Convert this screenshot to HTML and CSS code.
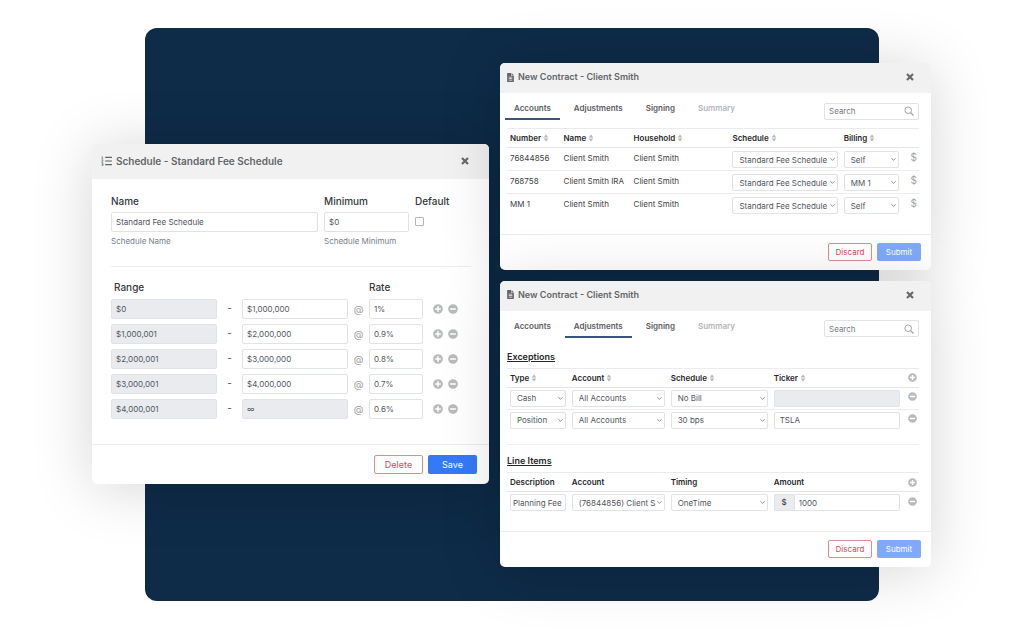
FILE: index.html
```html
<!DOCTYPE html>
<html lang="en">
<head>
<meta charset="utf-8">
<meta name="viewport" content="width=device-width, initial-scale=1">
<title>Fee schedules and contracts</title>
<link rel="stylesheet" href="styles.css">
</head>
<body>
<svg class="sprite" aria-hidden="true">
  <symbol id="plus" viewBox="0 0 512 512"><path d="M256 8a248 248 0 1 0 0 496 248 248 0 1 0 0-496zm144 288H296v104h-80V296H112v-80h104V112h80v104h104z"/></symbol>
  <symbol id="minus" viewBox="0 0 512 512"><path d="M256 8a248 248 0 1 0 0 496 248 248 0 1 0 0-496zm148 288H108v-80h296z"/></symbol>
  <symbol id="sort" viewBox="0 0 10 14"><path d="M1 6L5 1l4 5zM1 8l4 5 4-5z"/></symbol>
  <symbol id="close" viewBox="0 0 10 10"><path d="M2 2l6 6M8 2l-6 6" fill="none" stroke="currentColor" stroke-width="2.200"/></symbol>
  <symbol id="file" viewBox="0 0 384 512"><path fill-rule="evenodd" d="M224 0v136c0 13 11 24 24 24h136v328c0 13-11 24-24 24H24c-13 0-24-11-24-24V24C0 11 11 0 24 0zM256 0l128 128H256zM90 220v40h204v-40zM90 300v40h204v-40zM90 380v40h204v-40z"/></symbol>
  <symbol id="list" viewBox="0 0 12 11"><path d="M4.500 1.500H12M4.500 5.500H12M4.500 9.500H12" fill="none" stroke="currentColor" stroke-width="1.200"/><path d="M.6 .8h.9v2.400M.5 3.200h2M.5 4.600h1.600v.9L.6 6.700h1.800M.5 8h1.700v2.600H.5M1 9.300h1.200" fill="none" stroke="currentColor" stroke-width=".7"/></symbol>
  <symbol id="search" viewBox="0 0 10 10"><circle cx="4.200" cy="4.200" r="3.300" fill="none" stroke="currentColor"/><path d="M6.600 6.600L9.500 9.500" stroke="currentColor" stroke-width="1.300"/></symbol>
</svg>

<main class="stage">
  <div class="backdrop"></div>

  <section class="dialog schedule" aria-label="Schedule">
    <header class="dialog-head">
      <svg class="icon icon-list"><use href="#list"/></svg>
      <h2>Schedule - Standard Fee Schedule</h2>
      <button class="icon-btn close" aria-label="Close"><svg class="icon"><use href="#close"/></svg></button>
    </header>
    <div class="dialog-body">
      <div class="basics">
        <div class="field">
          <label for="s-name">Name</label>
          <input id="s-name" class="control" type="text" value="Standard Fee Schedule">
          <small>Schedule Name</small>
        </div>
        <div class="field">
          <label for="s-min">Minimum</label>
          <input id="s-min" class="control" type="text" value="$0">
          <small>Schedule Minimum</small>
        </div>
        <div class="field">
          <label for="s-def">Default</label>
          <input id="s-def" class="check" type="checkbox">
        </div>
      </div>
      <hr>
      <div class="tier tier-head"><span class="range-label">Range</span><span></span><span></span><span></span><span>Rate</span></div>
      <div class="tiers">
        <div class="tier">
          <input class="control" aria-label="From" value="$0" disabled><span class="dash">-</span>
          <input class="control" aria-label="To" value="$1,000,000"><span class="at">@</span>
          <input class="control" aria-label="Rate" value="1%">
          <span class="tier-actions"><button class="icon-btn" aria-label="Add"><svg class="icon"><use href="#plus"/></svg></button><button class="icon-btn" aria-label="Remove"><svg class="icon"><use href="#minus"/></svg></button></span>
        </div>
        <div class="tier">
          <input class="control" aria-label="From" value="$1,000,001" disabled><span class="dash">-</span>
          <input class="control" aria-label="To" value="$2,000,000"><span class="at">@</span>
          <input class="control" aria-label="Rate" value="0.9%">
          <span class="tier-actions"><button class="icon-btn" aria-label="Add"><svg class="icon"><use href="#plus"/></svg></button><button class="icon-btn" aria-label="Remove"><svg class="icon"><use href="#minus"/></svg></button></span>
        </div>
        <div class="tier">
          <input class="control" aria-label="From" value="$2,000,001" disabled><span class="dash">-</span>
          <input class="control" aria-label="To" value="$3,000,000"><span class="at">@</span>
          <input class="control" aria-label="Rate" value="0.8%">
          <span class="tier-actions"><button class="icon-btn" aria-label="Add"><svg class="icon"><use href="#plus"/></svg></button><button class="icon-btn" aria-label="Remove"><svg class="icon"><use href="#minus"/></svg></button></span>
        </div>
        <div class="tier">
          <input class="control" aria-label="From" value="$3,000,001" disabled><span class="dash">-</span>
          <input class="control" aria-label="To" value="$4,000,000"><span class="at">@</span>
          <input class="control" aria-label="Rate" value="0.7%">
          <span class="tier-actions"><button class="icon-btn" aria-label="Add"><svg class="icon"><use href="#plus"/></svg></button><button class="icon-btn" aria-label="Remove"><svg class="icon"><use href="#minus"/></svg></button></span>
        </div>
        <div class="tier">
          <input class="control" aria-label="From" value="$4,000,001" disabled><span class="dash">-</span>
          <input class="control" aria-label="To" value="∞" disabled><span class="at">@</span>
          <input class="control" aria-label="Rate" value="0.6%">
          <span class="tier-actions"><button class="icon-btn" aria-label="Add"><svg class="icon"><use href="#plus"/></svg></button><button class="icon-btn" aria-label="Remove"><svg class="icon"><use href="#minus"/></svg></button></span>
        </div>
      </div>
    </div>
    <footer class="dialog-foot">
      <button class="btn btn-danger">Delete</button>
      <button class="btn btn-primary">Save</button>
    </footer>
  </section>

  <div class="contracts">
    <section class="dialog contract" aria-label="New contract, accounts">
      <header class="dialog-head">
        <svg class="icon icon-file"><use href="#file"/></svg>
        <h2>New Contract - Client Smith</h2>
        <button class="icon-btn close" aria-label="Close"><svg class="icon"><use href="#close"/></svg></button>
      </header>
      <div class="toolbar">
        <nav class="tabs">
          <a href="#" class="active">Accounts</a><a href="#">Adjustments</a><a href="#">Signing</a><a href="#" class="muted">Summary</a>
        </nav>
        <label class="search"><input type="text" placeholder="Search" aria-label="Search"><svg class="icon"><use href="#search"/></svg></label>
      </div>
      <div class="dialog-body">
        <table class="grid accounts">
          <colgroup><col class="a1"><col class="a2"><col class="a3"><col class="a4"><col class="a5"><col></colgroup>
          <thead><tr>
            <th>Number <svg class="sort"><use href="#sort"/></svg></th>
            <th>Name <svg class="sort"><use href="#sort"/></svg></th>
            <th>Household <svg class="sort"><use href="#sort"/></svg></th>
            <th>Schedule <svg class="sort"><use href="#sort"/></svg></th>
            <th>Billing <svg class="sort"><use href="#sort"/></svg></th>
            <th></th>
          </tr></thead>
          <tbody>
            <tr><td class="text">76844856</td><td class="text">Client Smith</td><td class="text">Client Smith</td>
              <td><select class="control" aria-label="Schedule"><option>Standard Fee Schedule</option></select></td>
              <td><select class="control" aria-label="Billing"><option>Self</option></select></td>
              <td class="money">$</td></tr>
            <tr><td class="text">768758</td><td class="text">Client Smith IRA</td><td class="text">Client Smith</td>
              <td><select class="control" aria-label="Schedule"><option>Standard Fee Schedule</option></select></td>
              <td><select class="control" aria-label="Billing"><option>MM 1</option></select></td>
              <td class="money">$</td></tr>
            <tr><td class="text">MM 1</td><td class="text">Client Smith</td><td class="text">Client Smith</td>
              <td><select class="control" aria-label="Schedule"><option>Standard Fee Schedule</option></select></td>
              <td><select class="control" aria-label="Billing"><option>Self</option></select></td>
              <td class="money">$</td></tr>
          </tbody>
        </table>
      </div>
      <footer class="dialog-foot">
        <button class="btn btn-danger">Discard</button>
        <button class="btn btn-soft">Submit</button>
      </footer>
    </section>

    <section class="dialog contract" aria-label="New contract, adjustments">
      <header class="dialog-head">
        <svg class="icon icon-file"><use href="#file"/></svg>
        <h2>New Contract - Client Smith</h2>
        <button class="icon-btn close" aria-label="Close"><svg class="icon"><use href="#close"/></svg></button>
      </header>
      <div class="toolbar">
        <nav class="tabs">
          <a href="#">Accounts</a><a href="#" class="active">Adjustments</a><a href="#">Signing</a><a href="#" class="muted">Summary</a>
        </nav>
        <label class="search"><input type="text" placeholder="Search" aria-label="Search"><svg class="icon"><use href="#search"/></svg></label>
      </div>
      <div class="dialog-body adjustments">
        <h3>Exceptions</h3>
        <table class="grid">
          <colgroup><col class="b1"><col class="b2"><col class="b3"><col class="b4"><col></colgroup>
          <thead><tr>
            <th>Type <svg class="sort"><use href="#sort"/></svg></th>
            <th>Account <svg class="sort"><use href="#sort"/></svg></th>
            <th>Schedule <svg class="sort"><use href="#sort"/></svg></th>
            <th>Ticker <svg class="sort"><use href="#sort"/></svg></th>
            <th class="act"><button class="icon-btn" aria-label="Add exception"><svg class="icon"><use href="#plus"/></svg></button></th>
          </tr></thead>
          <tbody>
            <tr>
              <td><select class="control" aria-label="Type"><option>Cash</option></select></td>
              <td><select class="control" aria-label="Account"><option>All Accounts</option></select></td>
              <td><select class="control" aria-label="Schedule"><option>No Bill</option></select></td>
              <td><input class="control" aria-label="Ticker" disabled></td>
              <td class="act"><button class="icon-btn" aria-label="Remove"><svg class="icon"><use href="#minus"/></svg></button></td>
            </tr>
            <tr>
              <td><select class="control" aria-label="Type"><option>Position</option></select></td>
              <td><select class="control" aria-label="Account"><option>All Accounts</option></select></td>
              <td><select class="control" aria-label="Schedule"><option>30 bps</option></select></td>
              <td><input class="control" aria-label="Ticker" value="TSLA"></td>
              <td class="act"><button class="icon-btn" aria-label="Remove"><svg class="icon"><use href="#minus"/></svg></button></td>
            </tr>
          </tbody>
        </table>
        <hr>
        <h3>Line Items</h3>
        <table class="grid">
          <colgroup><col class="b1"><col class="b2"><col class="b3"><col class="b4"><col></colgroup>
          <thead><tr>
            <th>Description</th><th>Account</th><th>Timing</th><th>Amount</th>
            <th class="act"><button class="icon-btn" aria-label="Add line item"><svg class="icon"><use href="#plus"/></svg></button></th>
          </tr></thead>
          <tbody>
            <tr>
              <td><input class="control snug" aria-label="Description" value="Planning Fee"></td>
              <td><select class="control" aria-label="Account"><option>(76844856) Client S</option></select></td>
              <td><select class="control" aria-label="Timing"><option>OneTime</option></select></td>
              <td><div class="group"><span class="addon">$</span><input class="control" aria-label="Amount" value="1000"></div></td>
              <td class="act"><button class="icon-btn" aria-label="Remove"><svg class="icon"><use href="#minus"/></svg></button></td>
            </tr>
          </tbody>
        </table>
      </div>
      <footer class="dialog-foot">
        <button class="btn btn-danger">Discard</button>
        <button class="btn btn-soft">Submit</button>
      </footer>
    </section>
  </div>
</main>
</body>
</html>
```
FILE: styles.css
```css
* { box-sizing: border-box; }

body {
  margin: 0;
  background: #fff;
  color: #495057;
  font-family: Inter, "Liberation Sans", sans-serif;
  font-size: 8px;
  line-height: 12px;
}

button, input, select { font: inherit; color: inherit; margin: 0; }
h2, h3 { margin: 0; }
hr { border: 0; border-top: 1px solid #ebedef; margin: 0; }

.sprite { display: none; }
.icon { display: block; width: 10px; height: 10px; fill: currentColor; }

/* Stage: a dark panel with the dialogs laid over it in the same grid row */
.stage {
  display: grid;
  grid-template-columns: 92fr 53fr 344fr 11fr 379fr 52fr 93fr;
  align-items: center;
  padding: 28px 0;
  overflow: hidden;
}
.backdrop {
  grid-area: 1 / 3 / 2 / 6;
  align-self: stretch;
  background: #0e2b48;
  border-radius: 12px;
}
.schedule { grid-area: 1 / 2 / 2 / 4; }
.contracts {
  grid-area: 1 / 5 / 2 / 7;
  display: grid;
  gap: 11px;
  margin: 35px 0 34px;
}

/* Dialog */
.dialog {
  min-width: 0;
  background: #fff;
  border-radius: 5px;
  box-shadow: 0 4px 60px rgba(0, 0, 0, .17);
}
.dialog-head {
  display: flex;
  align-items: center;
  gap: 4px;
  height: 30px;
  padding: 0 16px 2px 7px;
  background: #f1f1f1;
  border-radius: 5px 5px 0 0;
  color: #626568;
}
.dialog-head h2 { font-size: 9px; font-weight: 600; }
.icon-file { width: 7px; height: 9px; }
.icon-list { width: 11px; height: 10px; }
.close { margin-left: auto; }
.dialog-foot {
  display: flex;
  justify-content: flex-end;
  gap: 5px;
  padding: 8px 10px 9px;
  border-top: 1px solid #e9ebed;
}

/* Buttons */
.icon-btn {
  display: block;
  padding: 0;
  border: 0;
  background: none;
  color: #b8babb;
}
.close.icon-btn { color: #66696c; }
.btn {
  width: 44px;
  height: 18px;
  padding: 0;
  border: 1px solid transparent;
  border-radius: 2px;
  background: #fff;
}
.btn-danger { border-color: #e08a92; color: #d8485a; }
.btn-primary { background: #347af6; color: #fff; }
.btn-soft { background: #80a9fb; color: #fff; }

/* Form controls */
.control {
  display: block;
  width: 100%;
  min-width: 0;
  height: 17px;
  padding: 0 5px;
  border: 1px solid #dfe2e6;
  border-radius: 2px;
  background: #fff;
  color: #50565c;
}
.control:disabled { background: #e9ebef; color: #50565c; opacity: 1; }
select.control {
  appearance: none;
  padding: 0 8px 0 6px;
  background: #fff url("data:image/svg+xml,%3Csvg xmlns='http://www.w3.org/2000/svg' viewBox='0 0 8 6'%3E%3Cpath d='M1.500 1.500L4 4l2.500-2.500' fill='none' stroke='%23777'/%3E%3C/svg%3E") no-repeat right 1px center / 7px 5px;
}
.control.snug { padding: 0 2px; }

/* Schedule dialog */
.schedule .dialog-head { height: 35px; padding: 0 19px 1px 9px; }
.schedule h2 { font-size: 10px; }
.schedule .dialog-body { padding: 16px 18px 25px 19px; }
.schedule .dialog-foot { padding: 10px 12px; gap: 5px; font-size: 9px; }
.schedule .btn { width: 49px; height: 19px; }
.schedule .control { height: 20px; padding: 0 4px; }
.basics {
  display: grid;
  grid-template-columns: 207fr 85fr 56fr;
  gap: 6px;
  margin-bottom: 19px;
}
.field label {
  display: block;
  margin-bottom: 5px;
  font-size: 10px;
  font-weight: 500;
  color: #34383c;
}
.field small {
  display: block;
  margin-top: 3px;
  font-size: 8px;
  color: #777f87;
}
.check {
  appearance: none;
  display: block;
  width: 9px;
  height: 9px;
  border: 1px solid #b4b7ba;
  border-radius: 1px;
  background: #fff;
}
.field label + .check { margin-top: 10px; }
.tiers { display: grid; gap: 5px; }
.tier {
  display: grid;
  grid-template-columns: 106fr 25fr 106fr 21fr 54fr 48fr;
  align-items: center;
}
.tier-head {
  margin: 14px 0 6px;
  font-size: 10px;
  font-weight: 500;
  color: #34383c;
}
.range-label { padding-left: 3px; }
.dash, .at { text-align: center; font-size: 10px; }
.dash { padding-bottom: 3px; }
.at { padding-bottom: 1px; color: #9a9da0; }
.tier-actions { display: flex; gap: 5px; padding-left: 10px; }

/* Contract dialogs */
.toolbar {
  display: flex;
  justify-content: space-between;
  align-items: center;
  padding: 9px 12px 0 5px;
}
.tabs { display: flex; gap: 5px; }
.tabs a {
  padding: 0 9px 4px;
  border-bottom: 2px solid transparent;
  font-weight: 600;
  color: #595d61;
  text-decoration: none;
}
.tabs .active { border-color: #3a5480; }
.tabs .muted { color: #b3b6b8; }
.search {
  display: flex;
  align-items: center;
  flex: 0 1 95px;
  height: 17px;
  min-width: 0;
  padding: 0 4px;
  border: 1px solid #dfe2e6;
  border-radius: 2px;
  color: #a0a3a6;
}
.search input {
  flex: 1;
  min-width: 0;
  padding: 0;
  border: 0;
  background: none;
  color: #50565c;
}
.search input::placeholder { color: #777b80; opacity: 1; }
.contract .dialog-body { padding: 8px 12px 17px 7px; }

.grid { width: 100%; table-layout: fixed; border-collapse: collapse; }
.grid th {
  height: 19px;
  padding: 0 3px;
  border-top: 1px solid #e9ebed;
  border-bottom: 1px solid #e2e4e7;
  color: #26292c;
  font-weight: 600;
  text-align: left;
  white-space: nowrap;
}
.grid td {
  height: 23px;
  padding: 3px 3px 2px;
  border-bottom: 1px solid #ebedef;
  white-space: nowrap;
  color: #3d4145;
}
.grid tr:last-child td { border-bottom: 0; }
.grid td.text { padding: 0 3px 3px; }
.sort { width: 6px; height: 8px; fill: #b4b6b8; vertical-align: -1px; }
.a1 { width: 13%; }
.a2 { width: 17%; }
.a3 { width: 24%; }
.a4 { width: 27%; }
.a5 { width: 15%; }
.b1 { width: 15%; }
.b2 { width: 24%; }
.b3 { width: 25%; }
.b4 { width: 32%; }
.grid td.money { padding: 0 2px 5px 0; font-size: 10px; color: #a0a3a6; text-align: right; }
.grid .act { padding-right: 2px; }
.grid .act .icon-btn { margin-left: auto; }
.grid .act .icon { width: 9px; height: 9px; }

.adjustments h3 {
  margin-bottom: 5px;
  color: #26292c;
  font-size: 9px;
  font-weight: 600;
  text-decoration: underline;
}
.contract .adjustments { padding-top: 13px; }
.adjustments .grid td { height: 22px; padding-top: 2px; }
.adjustments .grid td.act { padding-bottom: 5px; }
.adjustments hr { margin: 13px 0 10px; }
.group { display: flex; }
.addon {
  flex: none;
  width: 20px;
  height: 17px;
  border: 1px solid #dfe2e6;
  border-right: 0;
  border-radius: 2px 0 0 2px;
  background: #e9ebef;
  font-weight: 500;
  line-height: 15px;
  text-align: center;
}
.group .control { padding: 0 4px; border-radius: 0 2px 2px 0; }
```
